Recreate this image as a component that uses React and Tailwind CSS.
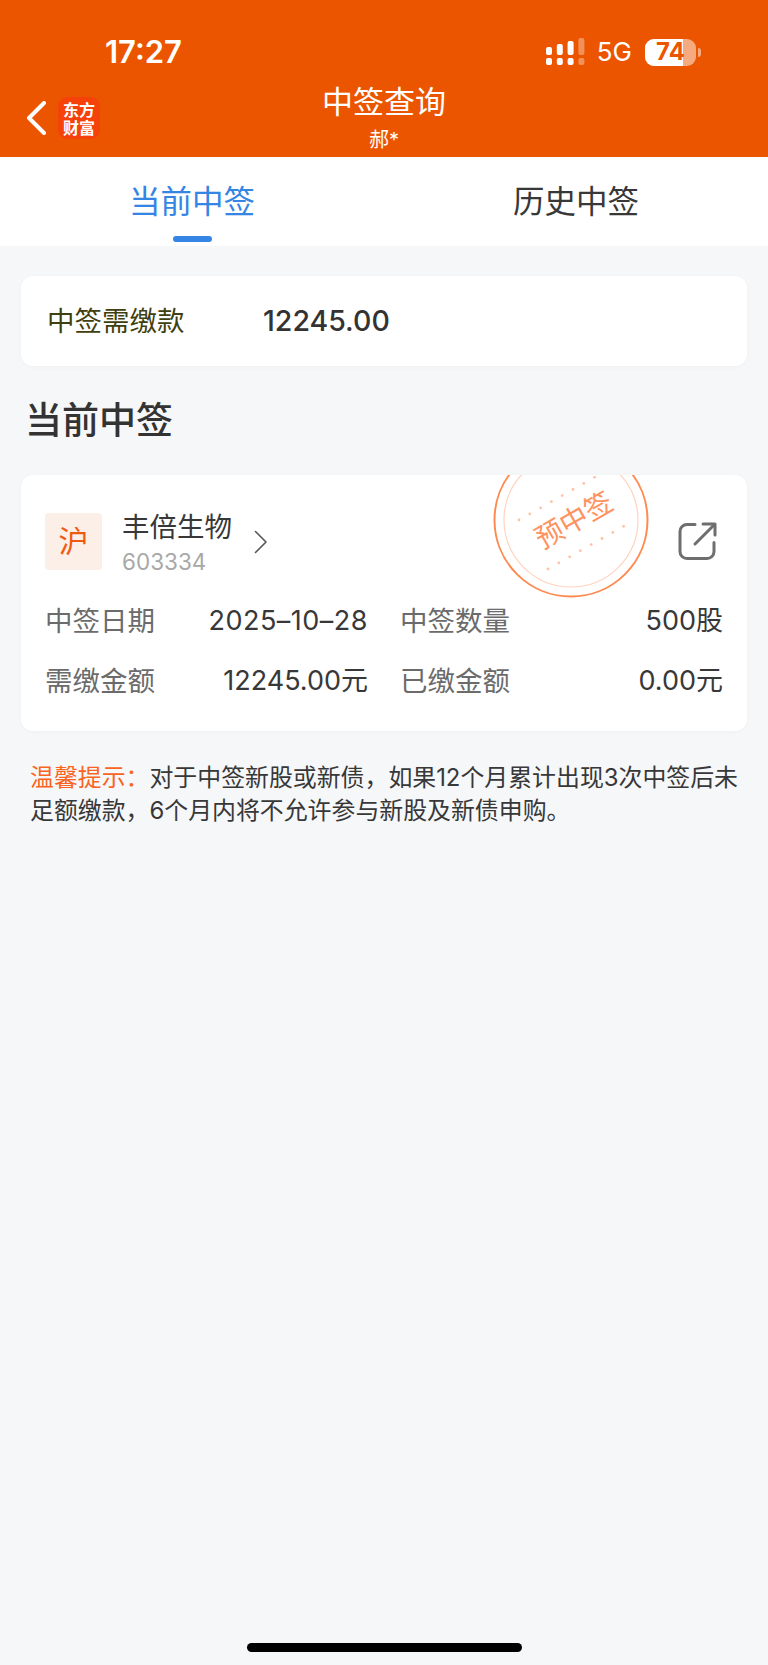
import React from 'react';

const FONT = "font-['Inter','Noto_Sans_CJK_SC',sans-serif]";

const SignalIcon = () => (
  <svg width="40" height="28" viewBox="0 0 40 28" fill="#fff">
    <rect x="1" y="9" width="6" height="8" rx="2" />
    <rect x="1" y="20" width="6" height="7" rx="2" />
    <rect x="11.8" y="6" width="6" height="11" rx="2" />
    <rect x="11.8" y="20" width="6" height="7" rx="2" />
    <rect x="22.6" y="3" width="6" height="14" rx="2" />
    <rect x="22.6" y="20" width="6" height="7" rx="2" />
    <rect x="33.4" y="0" width="6" height="17" rx="2" opacity="0.35" />
    <rect x="33.4" y="20" width="6" height="7" rx="2" opacity="0.35" />
  </svg>
);

const Battery = () => (
  <div className="flex items-center gap-[2px]">
    <div className="relative flex h-[27px] w-[51px] items-center justify-center overflow-hidden rounded-[9px] bg-white/50">
      <div className="absolute inset-y-0 left-0 w-[38px] bg-white" />
      <span className="relative text-[24px] leading-none font-bold text-[#ec5500]">74</span>
    </div>
    <div className="h-[9px] w-[3px] rounded-r-full bg-white/50" />
  </div>
);

// stamp drawn over the top of the stock card, cut off by the card edge
const Stamp = () => {
  const dots = [0, 1, 2, 3, 4, 5, 6, 7];
  return (
    <div className="absolute left-[472px] top-[-33px] h-[156px] w-[156px]">
      <svg width="156" height="156" viewBox="0 0 156 156" fill="none">
        <circle cx="78" cy="78" r="76.5" stroke="#ff8a50" strokeWidth="2" />
        <circle cx="78" cy="78" r="67" stroke="#ffd3bf" strokeWidth="1.2" />
        {dots.map((i) => (
          <circle key={i} cx={26 + i * 10.8} cy={78 - i * 6.1} r="1.4" fill="#ffc2a6" />
        ))}
        {dots.map((i) => (
          <circle key={i} cx={55 + i * 10.8} cy={127 - i * 6.1} r="1.4" fill="#ffc2a6" />
        ))}
      </svg>
      <span className="absolute left-[31px] top-[61px] w-[100px] -rotate-[30deg] text-center text-[28px] leading-[34px] whitespace-nowrap text-[#ff9260]">
        预中签
      </span>
    </div>
  );
};

const InfoRow = ({ label, value, valueClass = '' }) => (
  <div className="flex items-center justify-between">
    <span className="text-[27.5px] leading-[36px] text-[#6b6b6b]">{label}</span>
    <span className={`text-[27px] leading-[36px] text-[#383838] ${valueClass}`}>{value}</span>
  </div>
);

export default function App() {
  return (
    <div className={`${FONT} flex h-[1665px] w-[768px] flex-col overflow-hidden bg-[#f6f7f9]`}>
      {/* Orange header */}
      <header className="h-[157px] shrink-0 bg-[#ec5500] text-white">
        <div className="flex h-[90px] items-start justify-between pt-[34px] pl-[105px] pr-[67px]">
          <span className="text-[31px] leading-[36px] font-semibold">17:27</span>
          <div className="flex items-center pt-[4px]">
            <SignalIcon />
            <span className="ml-[12px] mr-[13px] text-[26px] leading-[28px]">5G</span>
            <Battery />
          </div>
        </div>
        <div className="-mt-[7px] grid grid-cols-[1fr_auto_1fr]">
          <div className="flex items-center pl-[26px]">
            <svg width="20" height="34" viewBox="0 0 20 34" fill="none" stroke="#fff" strokeWidth="4" strokeLinecap="round" strokeLinejoin="round">
              <path d="M18 2 3 17l15 15" />
            </svg>
            <div className="ml-[12px] flex h-[42px] w-[42px] flex-col items-center justify-center rounded-[9px] bg-[#f5420a] text-[16px] leading-[18px] font-bold font-['Noto_Sans_CJK_SC',sans-serif]">
              <span>东方</span>
              <span>财富</span>
            </div>
          </div>
          <div className="flex flex-col items-center">
            <span className="text-[31px] leading-[38px]">中签查询</span>
            <span className="mt-[6px] text-[20px] leading-[26px]">郝*</span>
          </div>
          <div />
        </div>
      </header>

      {/* Tabs */}
      <nav className="grid h-[89px] shrink-0 grid-cols-2 bg-white">
        <div className="relative flex justify-center pt-[23px]">
          <span className="text-[31.5px] leading-[44px] text-[#3485e4]">当前中签</span>
          <div className="absolute bottom-[4px] h-[6px] w-[39px] rounded-full bg-[#3485e4]" />
        </div>
        <div className="flex justify-center pt-[23px]">
          <span className="text-[31.5px] leading-[44px] text-[#383838]">历史中签</span>
        </div>
      </nav>

      <main className="flex flex-col px-[21px] pt-[30px]">
        {/* Amount due */}
        <section className="flex h-[90px] items-center rounded-[12px] bg-white pl-[26px] shadow-[0_1px_4px_rgba(0,0,0,0.03)]">
          <span className="w-[216px] text-[27.5px] leading-[36px] text-[#3f3f0f]">中签需缴款</span>
          <span className="text-[28.5px] leading-[36px] font-medium text-[#333]">12245.00</span>
        </section>

        <h2 className="mt-[32px] ml-[4px] text-[37px] leading-[46px] font-medium text-[#333]">当前中签</h2>

        {/* Stock card */}
        <section className="relative mt-[31px] h-[256px] overflow-hidden rounded-[12px] bg-white shadow-[0_1px_4px_rgba(0,0,0,0.03)]">
          <Stamp />
          <div className="flex items-start pt-[34px] pl-[24px] pr-[24px]">
            <div className="mt-[4px] flex h-[57px] w-[57px] items-center justify-center rounded-[4px] bg-[#fcefe8] text-[30px] text-[#f05a10]">
              沪
            </div>
            <div className="ml-[20px] flex flex-col">
              <span className="text-[27.5px] leading-[36px] text-[#383838]">丰倍生物</span>
              <span className="mt-[3px] text-[22.5px] leading-[28px] text-[#a8a8a8]">603334</span>
            </div>
            <svg width="14" height="24" viewBox="0 0 14 24" fill="none" stroke="#555" strokeWidth="1.6" strokeLinecap="round" strokeLinejoin="round" className="mt-[21px] ml-[22px]">
              <path d="M1.5 1.5 12 12 1.5 22.5" />
            </svg>
            <svg width="40" height="40" viewBox="0 0 40 40" fill="none" stroke="#6e6e6e" strokeWidth="3" strokeLinecap="round" strokeLinejoin="round" className="mt-[12px] ml-auto mr-[5px]">
              <path d="M17 3.5H9a7 7 0 0 0-7 7v20a7 7 0 0 0 7 7h20a7 7 0 0 0 7-7v-9" />
              <path d="M17 23 36 4" />
              <path d="M25 3h12v11" />
            </svg>
          </div>
          <div className="mt-[27px] grid grid-cols-2 gap-x-[32px] gap-y-[24px] pl-[24px] pr-[24px]">
            <InfoRow label="中签日期" value="2025–10–28" valueClass="tracking-[0.5px]" />
            <InfoRow label="中签数量" value="500股" />
            <InfoRow label="需缴金额" value="12245.00元" />
            <InfoRow label="已缴金额" value="0.00元" />
          </div>
        </section>

        {/* Subscription warning */}
        <p className="mt-[30px] pl-[9px] pr-[4px] text-[23.9px] leading-[33px] text-[#383838]">
          <span className="text-[#f9641e]">温馨提示：</span>
          对于中签新股或新债，如果12个月累计出现3次中签后未足额缴款，6个月内将不允许参与新股及新债申购。
        </p>
      </main>

      {/* Home indicator */}
      <div className="mt-auto mb-[13px] flex justify-center">
        <div className="h-[9px] w-[275px] rounded-full bg-black" />
      </div>
    </div>
  );
}
